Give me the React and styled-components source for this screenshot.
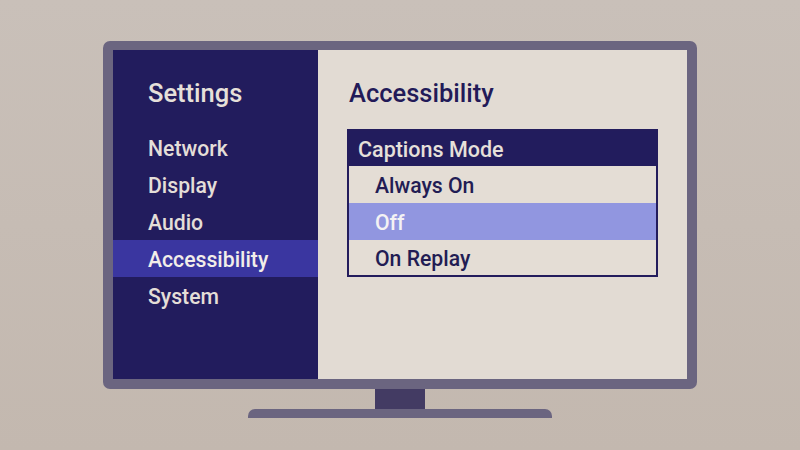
import React from 'react';
import styled, { createGlobalStyle } from 'styled-components';

const GlobalStyle = createGlobalStyle`
    html, body {
        margin: 0;
        padding: 0;
        background: #c6bcb4;
        font-family: Roboto, "Noto Sans", "Liberation Sans", sans-serif;
    }
`;

const Room = styled.div`
    width: 800px;
    height: 450px;
    display: flex;
    flex-direction: column;
    align-items: center;
    padding-top: 41px;
    box-sizing: border-box;
    background: linear-gradient(180deg, #c9c0b9 0%, #c3b8af 100%);
`;

const Frame = styled.div`
    width: 594px;
    height: 348px;
    box-sizing: border-box;
    padding: 9px 10px 10px 10px;
    background: #6b6580;
    border-radius: 7px;
`;

const Screen = styled.div`
    display: flex;
    width: 100%;
    height: 100%;
`;

const Sidebar = styled.div`
    width: 205px;
    background: #221c5d;
    padding-top: 25px;
    display: flex;
    flex-direction: column;
`;

const Heading = styled.div`
    font-size: 25.5px;
    font-weight: 500;
    line-height: 37px;
    padding-left: ${props => props.inset}px;
    color: ${props => props.color};
    margin-bottom: 17px;
`;

/* rows are 37px tall; text sits 1px below centre */
const MenuItem = styled.div`
    height: 37px;
    box-sizing: border-box;
    padding-top: 2px;
    line-height: 35px;
    padding-left: 35px;
    font-size: 21.2px;
    font-weight: 500;
    color: ${props => (props.active ? '#f2eee9' : '#e4ded8')};
    background: ${props => (props.active ? '#3a36a0' : 'transparent')};
`;

const Pane = styled.div`
    flex: 1;
    background: #e2dbd3;
    padding-top: 25px;
    padding-left: 29px;
`;

const Dropdown = styled.div`
    width: 311px;
    box-sizing: border-box;
    border: 2px solid #231c5c;
    background: #e4ddd5;
`;

const DropdownHeader = styled.div`
    height: 35px;
    box-sizing: border-box;
    padding: 2px 0 0 9px;
    line-height: 33px;
    background: #221c5d;
    color: #e6e0da;
    font-size: 21.5px;
    font-weight: 500;
`;

const Option = styled.div`
    height: 37px;
    box-sizing: border-box;
    padding: 2px 0 0 26px;
    line-height: 35px;
    font-size: 21.2px;
    font-weight: 500;
    color: ${props => (props.selected ? '#f4f2f4' : '#221c54')};
    background: ${props => (props.selected ? '#9196e0' : 'transparent')};
    &:last-child {
        height: 35px;
        line-height: 33px;
    }
`;

const Neck = styled.div`
    width: 50px;
    height: 20px;
    background: #433b63;
`;

const Base = styled.div`
    width: 304px;
    height: 9px;
    background: #6b6580;
    border-radius: 7px 7px 0 0;
`;

const menu = ['Network', 'Display', 'Audio', 'Accessibility', 'System'];
const options = ['Always On', 'Off', 'On Replay'];

const App = () => {
    return (
        <>
            <GlobalStyle />
            <Room>
                <Frame>
                    <Screen>
                        <Sidebar>
                            <Heading inset={35} color="#e6e0da">Settings</Heading>
                            {menu.map(item => (
                                <MenuItem key={item} active={item === 'Accessibility'}>
                                    {item}
                                </MenuItem>
                            ))}
                        </Sidebar>
                        <Pane>
                            <Heading inset={2} color="#221a58">Accessibility</Heading>
                            <Dropdown>
                                <DropdownHeader>Captions Mode</DropdownHeader>
                                {options.map(option => (
                                    <Option key={option} selected={option === 'Off'}>
                                        {option}
                                    </Option>
                                ))}
                            </Dropdown>
                        </Pane>
                    </Screen>
                </Frame>
                <Neck />
                <Base />
            </Room>
        </>
    );
};

export default App;
